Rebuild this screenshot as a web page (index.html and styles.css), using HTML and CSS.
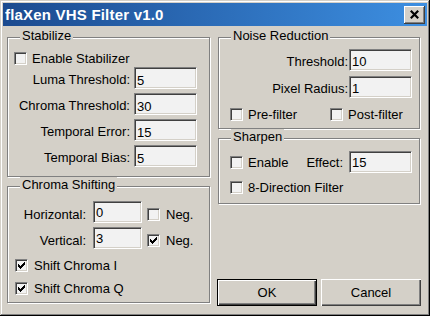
FILE: index.html
```html
<!DOCTYPE html>
<html>
  <head>
    <meta charset="utf-8">
    <link rel="stylesheet" href="styles.css">
  </head>
  <body>
    <div class="window">
      <div class="titlebar">
        <span class="title">flaXen VHS Filter v1.0</span>
        <span class="close">
          <svg width="9" height="9" viewBox="0 0 9 9"><path d="M0.8 0.8L8.2 8.2M8.2 0.8L0.8 8.2" stroke="#000" stroke-width="2.2"/></svg>
        </span>
      </div>

      <div class="content">
        <div class="col">
          <fieldset class="group stabilize">
            <legend>Stabilize</legend>
            <label class="check"><span class="box"></span>Enable Stabilizer</label>
            <div class="field"><span class="label">Luma Threshold:</span><span class="edit">5</span></div>
            <div class="field"><span class="label">Chroma Threshold:</span><span class="edit">30</span></div>
            <div class="field"><span class="label">Temporal Error:</span><span class="edit">15</span></div>
            <div class="field"><span class="label">Temporal Bias:</span><span class="edit">5</span></div>
          </fieldset>

          <fieldset class="group chroma">
            <legend>Chroma Shifting</legend>
            <div class="shift">
              <span class="label">Horizontal:</span><span class="edit">0</span>
              <label class="check"><span class="box"></span>Neg.</label>
            </div>
            <div class="shift">
              <span class="label">Vertical:</span><span class="edit">3</span>
              <label class="check"><span class="box"><svg class="tick" width="7" height="7" viewBox="0 0 7 7"><path d="M6 0h1v1h-1zM5 1h2v1h-2zM0 2h1v1h-1zM4 2h3v1h-3zM0 3h2v1h-2zM3 3h3v1h-3zM0 4h5v1h-5zM1 5h3v1h-3zM2 6h1v1h-1z"/></svg></span>Neg.</label>
            </div>
            <label class="check row-i"><span class="box"><svg class="tick" width="7" height="7" viewBox="0 0 7 7"><path d="M6 0h1v1h-1zM5 1h2v1h-2zM0 2h1v1h-1zM4 2h3v1h-3zM0 3h2v1h-2zM3 3h3v1h-3zM0 4h5v1h-5zM1 5h3v1h-3zM2 6h1v1h-1z"/></svg></span>Shift Chroma I</label>
            <label class="check row-q"><span class="box"><svg class="tick" width="7" height="7" viewBox="0 0 7 7"><path d="M6 0h1v1h-1zM5 1h2v1h-2zM0 2h1v1h-1zM4 2h3v1h-3zM0 3h2v1h-2zM3 3h3v1h-3zM0 4h5v1h-5zM1 5h3v1h-3zM2 6h1v1h-1z"/></svg></span>Shift Chroma Q</label>
          </fieldset>
        </div>

        <div class="col right">
          <fieldset class="group noise">
            <legend>Noise Reduction</legend>
            <div class="field"><span class="label">Threshold:</span><span class="edit">10</span></div>
            <div class="field"><span class="label">Pixel Radius:</span><span class="edit">1</span></div>
            <div class="checks">
              <label class="check pre"><span class="box"></span>Pre-filter</label>
              <label class="check"><span class="box"></span>Post-filter</label>
            </div>
          </fieldset>

          <fieldset class="group sharpen">
            <legend>Sharpen</legend>
            <div class="sharp-row">
              <label class="check"><span class="box"></span>Enable</label>
              <div class="effect"><span class="label">Effect:</span><span class="edit">15</span></div>
            </div>
            <label class="check dir"><span class="box"></span>8-Direction Filter</label>
          </fieldset>

          <div class="buttons">
            <span class="btn default">OK</span>
            <span class="btn">Cancel</span>
          </div>
        </div>
      </div>
    </div>
  </body>
</html>
```

FILE: styles.css
```css
body {
  margin: 0;
  background: #d4d0c8;
  color: #000;
  font: 13px/15px "Liberation Sans", Arial, sans-serif;
}

.window {
  width: 430px;
  height: 316px;
  box-sizing: border-box;
  padding: 3px;
  display: flex;
  flex-direction: column;
  background: #d4d0c8;
  box-shadow: inset -1px -1px #000, inset 1px 1px #d4d0c8, inset -2px -2px #808080, inset 2px 2px #fff;
}

.titlebar {
  height: 23px;
  display: flex;
  align-items: center;
  justify-content: space-between;
  padding: 0 2px;
  background: linear-gradient(90deg, #1b4a8f, #3d8fe1);
  color: #fff;
}
.title {
  font-weight: bold;
  font-size: 15px;
  line-height: 17px;
  letter-spacing: 0.2px;
  padding-bottom: 1px;
}
.close {
  width: 21px;
  height: 18px;
  box-sizing: border-box;
  display: flex;
  align-items: center;
  justify-content: center;
  background: #d4d0c8;
  box-shadow: inset -1px -1px #404040, inset 1px 1px #fff, inset -2px -2px #808080;
}
.close svg {
  display: block;
}

.content {
  flex: 1;
  display: flex;
  gap: 6px;
  padding: 2px 6px 6px 4px;
}
.col {
  width: 204px;
  display: flex;
  flex-direction: column;
}

/* group boxes */
.group {
  margin: 0;
  padding: 0;
  width: 203px;
  min-width: 0;
  box-sizing: border-box;
  border: 1px solid #808080;
  box-shadow: inset 1px 1px #fff, 1px 1px #fff;
}
.group legend {
  margin-left: 12px;
  padding: 0 2px 4px;
  line-height: 15px;
  background: #d4d0c8;
}
.right .group {
  width: 202px;
  margin-left: 1px;
}

/* checkboxes */
.check {
  display: flex;
  align-items: center;
  gap: 5px;
  height: 15px;
  white-space: nowrap;
}
.box {
  width: 13px;
  height: 13px;
  box-sizing: border-box;
  flex: none;
  padding: 2px;
  border: 1px solid;
  border-color: #808080 #fff #fff #808080;
  box-shadow: inset 1px 1px #404040, inset -1px -1px #d4d0c8;
  background: #f2f2f2;
}
.tick {
  display: block;
  shape-rendering: crispEdges;
}

/* edit boxes */
.edit {
  box-sizing: border-box;
  width: 63px;
  height: 22px;
  flex: none;
  padding: 4px 2px 0;
  border: 1px solid;
  border-color: #808080 #fff #fff #808080;
  box-shadow: inset 1px 1px #404040, inset -1px -1px #d4d0c8;
  background: #f2f2f2;
  white-space: nowrap;
}

.field {
  display: flex;
  align-items: center;
  justify-content: flex-end;
  height: 22px;
}
.field .label {
  padding-top: 2px;
}

/* stabilize */
.stabilize .check {
  margin: 4px 0 0 6px;
}
.stabilize .field {
  gap: 4px;
  padding-right: 12px;
  margin-top: 4px;
}
.stabilize .check + .field {
  margin-top: 1px;
}
.stabilize .edit {
  padding-top: 5px;
}
.stabilize .field:last-child {
  margin-bottom: 9px;
}

/* chroma shifting */
.shift {
  display: flex;
  align-items: center;
  height: 22px;
  margin-top: 4px;
}
.chroma legend + .shift {
  margin-top: 5px;
}
.shift .label {
  width: 78px;
  text-align: right;
  padding-top: 4px;
}
.shift .edit {
  width: 49px;
  margin-left: 7px;
  padding-top: 3px;
}
.shift .check {
  margin-left: 5px;
  gap: 6px;
  padding-top: 4px;
}
.chroma .row-i,
.chroma .row-q {
  margin-left: 7px;
  gap: 6px;
}
.chroma .row-i {
  margin-top: 9px;
}
.chroma .row-q {
  margin-top: 8px;
  margin-bottom: 6px;
}

/* noise reduction */
.noise .field {
  gap: 1px;
  padding-right: 7px;
  margin-top: 5px;
}
.noise legend + .field {
  margin-top: 2px;
}
.checks {
  display: flex;
  padding-left: 11px;
  margin: 9px 0 6px;
}
.checks .pre {
  width: 100px;
}

/* sharpen */
.sharp-row {
  display: flex;
  align-items: center;
  height: 22px;
  margin-top: 3px;
  padding: 0 7px 0 11px;
}
.effect {
  margin-left: auto;
  display: flex;
  align-items: center;
  gap: 6px;
}
.effect .edit {
  padding-top: 3px;
}
.sharpen .dir {
  margin: 7px 0 8px 11px;
}

/* buttons */
.buttons {
  margin-top: auto;
  margin-bottom: 1px;
  display: flex;
  gap: 4px;
}
.btn {
  width: 100px;
  height: 27px;
  box-sizing: border-box;
  display: flex;
  align-items: center;
  justify-content: center;
  background: #d4d0c8;
  box-shadow: inset 1px 1px #fff, inset -1px -1px #404040, inset -2px -2px #808080;
}
.btn.default {
  border: 1px solid #000;
}
```
